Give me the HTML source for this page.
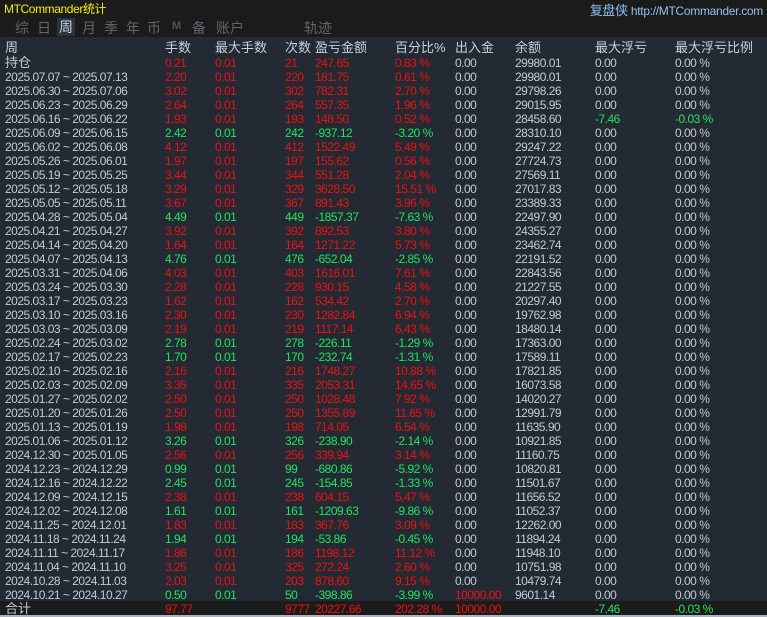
<!DOCTYPE html>
<html><head><meta charset="utf-8"><style>
*{margin:0;padding:0;box-sizing:border-box}
body{width:767px;height:617px;overflow:hidden;background:#232a33;font-family:"Liberation Sans","Noto Sans CJK SC",sans-serif;font-size:12px;color:#c2cad6;position:relative}
.top{position:absolute;left:0;top:0;width:767px;height:37px;background:#1b1b1b}
.title{position:absolute;left:4px;top:0px;color:#f0f000;font-size:12px;letter-spacing:-0.4px}
.site{position:absolute;right:4px;top:0px;color:#8fc0f0;font-size:12px;letter-spacing:-0.3px}
.site b{font-weight:normal;font-size:13px}
.tab{position:absolute;top:18px;color:#5f666e;font-size:14px}
.tab.on{background:#2c343e;color:#c8d0dc;padding:0 2px;margin-left:-2px;height:18px;line-height:18px;top:18px}
.r{position:absolute;left:0;width:767px;height:14px;line-height:14px;letter-spacing:-0.5px;white-space:nowrap}
.r span{position:absolute}
.h{font-size:13px;letter-spacing:0;color:#c8d0dc}
.R{color:#ee1111}.G{color:#22e35e}
.tot{position:absolute;left:0;top:601px;width:767px;height:14px;background:#1b1b1b}
.bl{position:absolute;left:0;top:615px;width:767px;height:2px;background:#aab4c0}
</style></head><body>
<div class="top"></div>
<div class="title">MTCommander统计</div>
<div class="site"><b>复盘侠</b> http://MTCommander.com</div>
<span class="tab" style="left:15px">综</span>
<span class="tab" style="left:37px">日</span>
<span class="tab on" style="left:59px">周</span>
<span class="tab" style="left:82px">月</span>
<span class="tab" style="left:104px">季</span>
<span class="tab" style="left:126px">年</span>
<span class="tab" style="left:147px">币</span>
<span class="tab" style="left:172px;font-size:11px;font-weight:bold;top:20px;color:#4a5260">M</span>
<span class="tab" style="left:192px">备</span>
<span class="tab" style="left:216px">账户</span>
<span class="tab" style="left:304px">轨迹</span>
<div class="tot"></div><div class="bl"></div>
<div id="t"></div>
<script>
var cols=[5,165,215,285,315,395,455,515,595,675];
var h=["周","手数","最大手数","次数","盈亏金额","百分比%","出入金","余额","最大浮亏","最大浮亏比例"];
var d=`持仓|0.21|21|247.65|0.83 %|0.00|29980.01|0.00|0.00 %
2025.07.07 ~ 2025.07.13|2.20|220|181.75|0.61 %|0.00|29980.01|0.00|0.00 %
2025.06.30 ~ 2025.07.06|3.02|302|782.31|2.70 %|0.00|29798.26|0.00|0.00 %
2025.06.23 ~ 2025.06.29|2.64|264|557.35|1.96 %|0.00|29015.95|0.00|0.00 %
2025.06.16 ~ 2025.06.22|1.93|193|148.50|0.52 %|0.00|28458.60|-7.46|-0.03 %
2025.06.09 ~ 2025.06.15|2.42|242|-937.12|-3.20 %|0.00|28310.10|0.00|0.00 %
2025.06.02 ~ 2025.06.08|4.12|412|1522.49|5.49 %|0.00|29247.22|0.00|0.00 %
2025.05.26 ~ 2025.06.01|1.97|197|155.62|0.56 %|0.00|27724.73|0.00|0.00 %
2025.05.19 ~ 2025.05.25|3.44|344|551.28|2.04 %|0.00|27569.11|0.00|0.00 %
2025.05.12 ~ 2025.05.18|3.29|329|3628.50|15.51 %|0.00|27017.83|0.00|0.00 %
2025.05.05 ~ 2025.05.11|3.67|367|891.43|3.96 %|0.00|23389.33|0.00|0.00 %
2025.04.28 ~ 2025.05.04|4.49|449|-1857.37|-7.63 %|0.00|22497.90|0.00|0.00 %
2025.04.21 ~ 2025.04.27|3.92|392|892.53|3.80 %|0.00|24355.27|0.00|0.00 %
2025.04.14 ~ 2025.04.20|1.64|164|1271.22|5.73 %|0.00|23462.74|0.00|0.00 %
2025.04.07 ~ 2025.04.13|4.76|476|-652.04|-2.85 %|0.00|22191.52|0.00|0.00 %
2025.03.31 ~ 2025.04.06|4.03|403|1616.01|7.61 %|0.00|22843.56|0.00|0.00 %
2025.03.24 ~ 2025.03.30|2.28|228|930.15|4.58 %|0.00|21227.55|0.00|0.00 %
2025.03.17 ~ 2025.03.23|1.62|162|534.42|2.70 %|0.00|20297.40|0.00|0.00 %
2025.03.10 ~ 2025.03.16|2.30|230|1282.84|6.94 %|0.00|19762.98|0.00|0.00 %
2025.03.03 ~ 2025.03.09|2.19|219|1117.14|6.43 %|0.00|18480.14|0.00|0.00 %
2025.02.24 ~ 2025.03.02|2.78|278|-226.11|-1.29 %|0.00|17363.00|0.00|0.00 %
2025.02.17 ~ 2025.02.23|1.70|170|-232.74|-1.31 %|0.00|17589.11|0.00|0.00 %
2025.02.10 ~ 2025.02.16|2.16|216|1748.27|10.88 %|0.00|17821.85|0.00|0.00 %
2025.02.03 ~ 2025.02.09|3.35|335|2053.31|14.65 %|0.00|16073.58|0.00|0.00 %
2025.01.27 ~ 2025.02.02|2.50|250|1028.48|7.92 %|0.00|14020.27|0.00|0.00 %
2025.01.20 ~ 2025.01.26|2.50|250|1355.89|11.65 %|0.00|12991.79|0.00|0.00 %
2025.01.13 ~ 2025.01.19|1.98|198|714.05|6.54 %|0.00|11635.90|0.00|0.00 %
2025.01.06 ~ 2025.01.12|3.26|326|-238.90|-2.14 %|0.00|10921.85|0.00|0.00 %
2024.12.30 ~ 2025.01.05|2.56|256|339.94|3.14 %|0.00|11160.75|0.00|0.00 %
2024.12.23 ~ 2024.12.29|0.99|99|-680.86|-5.92 %|0.00|10820.81|0.00|0.00 %
2024.12.16 ~ 2024.12.22|2.45|245|-154.85|-1.33 %|0.00|11501.67|0.00|0.00 %
2024.12.09 ~ 2024.12.15|2.38|238|604.15|5.47 %|0.00|11656.52|0.00|0.00 %
2024.12.02 ~ 2024.12.08|1.61|161|-1209.63|-9.86 %|0.00|11052.37|0.00|0.00 %
2024.11.25 ~ 2024.12.01|1.83|183|367.76|3.09 %|0.00|12262.00|0.00|0.00 %
2024.11.18 ~ 2024.11.24|1.94|194|-53.86|-0.45 %|0.00|11894.24|0.00|0.00 %
2024.11.11 ~ 2024.11.17|1.86|186|1198.12|11.12 %|0.00|11948.10|0.00|0.00 %
2024.11.04 ~ 2024.11.10|3.25|325|272.24|2.60 %|0.00|10751.98|0.00|0.00 %
2024.10.28 ~ 2024.11.03|2.03|203|878.60|9.15 %|0.00|10479.74|0.00|0.00 %
2024.10.21 ~ 2024.10.27|0.50|50|-398.86|-3.99 %|10000.00|9601.14|0.00|0.00 %`.split("\n");
var o='<div class="r h" style="top:41px">';
h.forEach(function(s,i){o+='<span style="left:'+cols[i]+'px">'+s+'</span>'});
o+='</div>';
d.forEach(function(l,k){
 var f=l.split("|");var top=k==0?56:70+(k-1)*14;
 var neg=f[3].charAt(0)=="-";var c=neg?"G":"R";
 var v=[f[0],f[1],"0.01",f[2],f[3],f[4],f[5],f[6],f[7],f[8]];
 o+='<div class="r" style="top:'+top+'px">';
 v.forEach(function(s,i){
  var cl="";
  if(i>=1&&i<=5)cl=c;
  if(i==6&&s!="0.00")cl="R";
  if((i==8||i==9)&&s.charAt(0)=="-")cl="G";
  var st=(i==0&&k==0)?';font-size:13px;letter-spacing:0':'';
  o+='<span class="'+cl+'" style="left:'+cols[i]+'px'+st+'">'+s+'</span>';
 });
 o+='</div>';
});
o+='<div class="r" style="top:602px"><span style="left:5px;font-size:13px;letter-spacing:0">合计</span><span class="R" style="left:165px">97.77</span><span class="R" style="left:285px">9777</span><span class="R" style="left:315px">20227.66</span><span class="R" style="left:395px">202.28 %</span><span class="R" style="left:455px">10000.00</span><span class="G" style="left:595px">-7.46</span><span class="G" style="left:675px">-0.03 %</span></div>';
document.getElementById("t").innerHTML=o;
</script>
</body></html>
